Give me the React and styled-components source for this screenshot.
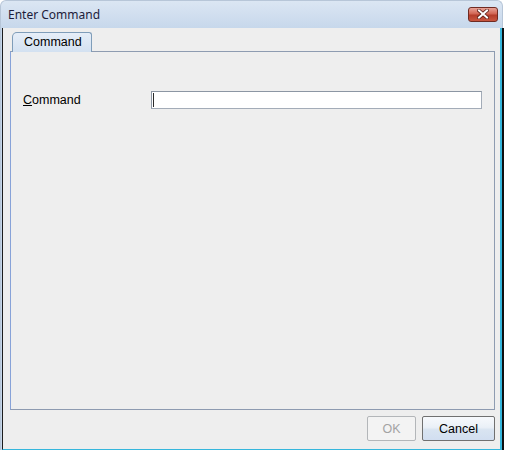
import React from 'react'
import styled, { createGlobalStyle } from 'styled-components'

const GlobalStyle = createGlobalStyle`
  html, body {
    margin: 0;
    padding: 0;
    background: #ffffff;
  }
  body {
    font-family: "Liberation Sans", Arial, sans-serif;
    font-size: 12.5px;
  }
`

const Frame = styled.div`
  width: 503px;
  height: 450px;
  display: flex;
  flex-direction: column;
  box-sizing: border-box;
  border-radius: 6px 6px 0 0;
  border: 1px solid #b7c6d8;
  border-bottom: none;
  background: linear-gradient(#dbe6f3 0px, #c6d7eb 28px, #c6d7eb 100%);
`

const TitleBar = styled.div`
  height: 27px;
  display: flex;
  align-items: center;
  justify-content: space-between;
  padding: 0 3px 0 7px;
  box-sizing: border-box;
`

const Title = styled.span`
  font-family: "Noto Sans", "Liberation Sans", sans-serif;
  font-size: 12px;
  color: #1c1c3a;
  margin-top: -1px;
`

const CloseButton = styled.div`
  width: 28px;
  height: 13px;
  border: 1px solid #6f2b22;
  border-radius: 3px;
  background: linear-gradient(#e7a296 0%, #d26553 45%, #b43d2b 55%, #c8563f 100%);
  display: flex;
  align-items: center;
  justify-content: center;
  margin-top: -1px;
  margin-right: 1px;
`

const Client = styled.div`
  flex: 1;
  display: flex;
  flex-direction: column;
  margin-left: 1px;
  background: #eeeeee;
  border-left: 1px solid #1d1d1d;
  border-right: 2px solid #35b6dc;
  border-bottom: 1px solid #35b6dc;
  box-shadow: 2px 0 0 #101010, 0 2px 0 #101010;
  padding: 4px 5px 0 7px;
`

const TabStrip = styled.div`
  display: flex;
  padding-left: 2px;
  height: 19px;
`

const Tab = styled.div`
  width: 80px;
  height: 20px;
  box-sizing: border-box;
  border: 1px solid #7f9db9;
  border-bottom: none;
  border-radius: 5px 3px 0 0;
  background: linear-gradient(#e6eef8, #d3e1f1);
  padding-left: 11px;
  line-height: 19px;
  color: #000;
  position: relative;
  z-index: 1;
`

const Panel = styled.div`
  height: 359px;
  box-sizing: border-box;
  border: 1px solid #8e9cb1;
  border-left-color: #87a2d8;
  border-bottom-color: #8d9ab0;
  background: #eeeeee;
  padding: 39px 12px 0 12px;
`

const FieldRow = styled.div`
  display: flex;
  align-items: center;
`

const Label = styled.label`
  width: 128px;
  color: #000;
  u {
    text-decoration: underline;
  }
`

const TextField = styled.div`
  width: 331px;
  height: 18px;
  box-sizing: border-box;
  border: 1px solid #a3acb8;
  border-top-color: #8c96a3;
  border-left-color: #8c96a3;
  background: #ffffff;
  position: relative;
  &::before {
    content: '';
    position: absolute;
    left: 1px;
    top: 1px;
    width: 1px;
    height: 14px;
    background: #2a2a2a;
  }
`

const ButtonRow = styled.div`
  display: flex;
  justify-content: flex-end;
  gap: 6px;
  padding-top: 6px;
`

const Button = styled.div`
  width: ${props => props.w}px;
  height: 25px;
  box-sizing: border-box;
  display: flex;
  align-items: center;
  justify-content: center;
  border-radius: 2px;
  border: 1px solid ${props => (props.disabled ? '#b3b6b9' : '#707070')};
  color: ${props => (props.disabled ? '#a3a3a3' : '#000')};
  background: ${props =>
    props.disabled
      ? '#f3f3f3'
      : 'linear-gradient(#f7f9fc 0%, #eaf0f7 45%, #d9e4f1 55%, #d1def0 100%)'};
`

const App = () => {
  return (
    <>
      <GlobalStyle />
      <Frame>
        <TitleBar>
          <Title>Enter Command</Title>
          <CloseButton>
            <svg width="12" height="10" viewBox="0 0 12 10">
              <path
                d="M2 1.5 L10 8.5 M10 1.5 L2 8.5"
                stroke="#5a1d16"
                strokeWidth="3.6"
                strokeLinecap="square"
              />
              <path
                d="M2 1.5 L10 8.5 M10 1.5 L2 8.5"
                stroke="#ffffff"
                strokeWidth="2"
                strokeLinecap="square"
              />
            </svg>
          </CloseButton>
        </TitleBar>
        <Client>
          <TabStrip>
            <Tab>Command</Tab>
          </TabStrip>
          <Panel>
            <FieldRow>
              <Label>
                <u>C</u>ommand
              </Label>
              <TextField />
            </FieldRow>
          </Panel>
          <ButtonRow>
            <Button w={49} disabled>
              OK
            </Button>
            <Button w={73}>Cancel</Button>
          </ButtonRow>
        </Client>
      </Frame>
    </>
  )
}

export default App
